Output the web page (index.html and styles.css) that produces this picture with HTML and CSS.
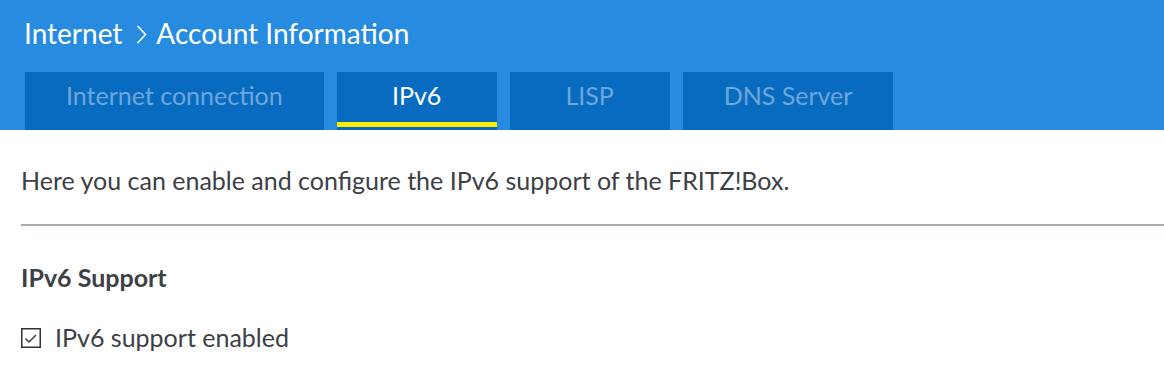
FILE: index.html
```html
<!DOCTYPE html>
<html lang="en">
<head>
<meta charset="utf-8">
<title>Internet – Account Information</title>
<link rel="stylesheet" href="styles.css">
</head>
<body>
<header class="header">
  <h1 class="title">
    <span>Internet</span>
    <svg class="chevron" width="11" height="19" viewBox="0 0 11 19" aria-hidden="true"><polyline points="1.5,1 9.5,9.5 1.5,18" fill="none" stroke="#fff" stroke-width="1.6"/></svg>
    <span>Account Information</span>
  </h1>
  <nav class="tabs">
    <a class="tab">Internet connection</a>
    <a class="tab active">IPv6</a>
    <a class="tab">LISP</a>
    <a class="tab">DNS Server</a>
  </nav>
</header>
<main class="content">
  <p class="intro">Here you can enable and configure the IPv6 support of the FRITZ!Box.</p>
  <hr class="divider">
  <h2 class="section-title">IPv6 Support</h2>
  <label class="check-row">
    <svg class="checkbox" width="20" height="20" viewBox="0 0 20 20" aria-hidden="true">
      <rect x="0.75" y="0.75" width="18.5" height="18.5" fill="#fff" stroke="#333" stroke-width="1.5"/>
      <polyline points="4.5,10.5 8,14 15,7" fill="none" stroke="#333" stroke-width="1.4"/>
    </svg>
    <span>IPv6 support enabled</span>
  </label>
</main>
</body>
</html>
```
FILE: styles.css
```css
* { box-sizing: border-box; }
html, body { margin: 0; padding: 0; background: #fff; }
body {
  font-family: "Lato", "Liberation Sans", sans-serif;
  color: #3c4146;
  font-size: 25px;
}
.header {
  background: #278ce0;
  height: 130px;
  display: flex;
  flex-direction: column;
}
.title {
  margin: 0;
  padding: 16px 0 0 24px;
  height: 72px;
  font-size: 28px;
  font-weight: 400;
  line-height: 34px;
  color: #fff;
  display: flex;
  align-items: flex-start;
}
.chevron {
  margin: 9px 9px 0 14px;
  flex: none;
}
.tabs {
  display: flex;
  gap: 13px;
  padding-left: 25px;
  height: 58px;
}
.tab {
  position: relative;
  background: #076cc0;
  color: #6ea6da;
  min-width: 160px;
  padding: 0 41px 11px;
  line-height: 47px;
  text-align: center;
  white-space: nowrap;
}
.tab.active { color: #fff; }
.tab.active::after {
  content: "";
  position: absolute;
  left: 0;
  right: 0;
  bottom: 3px;
  height: 5px;
  background: #ffed00;
}
.content {
  padding: 35px 0 0 21px;
}
.intro {
  margin: 0;
  line-height: 30px;
}
.divider {
  margin: 29px 0 0;
  border: 0;
  height: 2px;
  background: #a5aeac;
}
.section-title {
  margin: 36px 0 0;
  font-size: 25px;
  font-weight: 700;
  line-height: 30px;
}
.check-row {
  margin-top: 30px;
  display: flex;
  align-items: flex-start;
  line-height: 30px;
}
.checkbox {
  margin-top: 6px;
  flex: none;
}
.check-row span { margin-left: 14px; }
```
